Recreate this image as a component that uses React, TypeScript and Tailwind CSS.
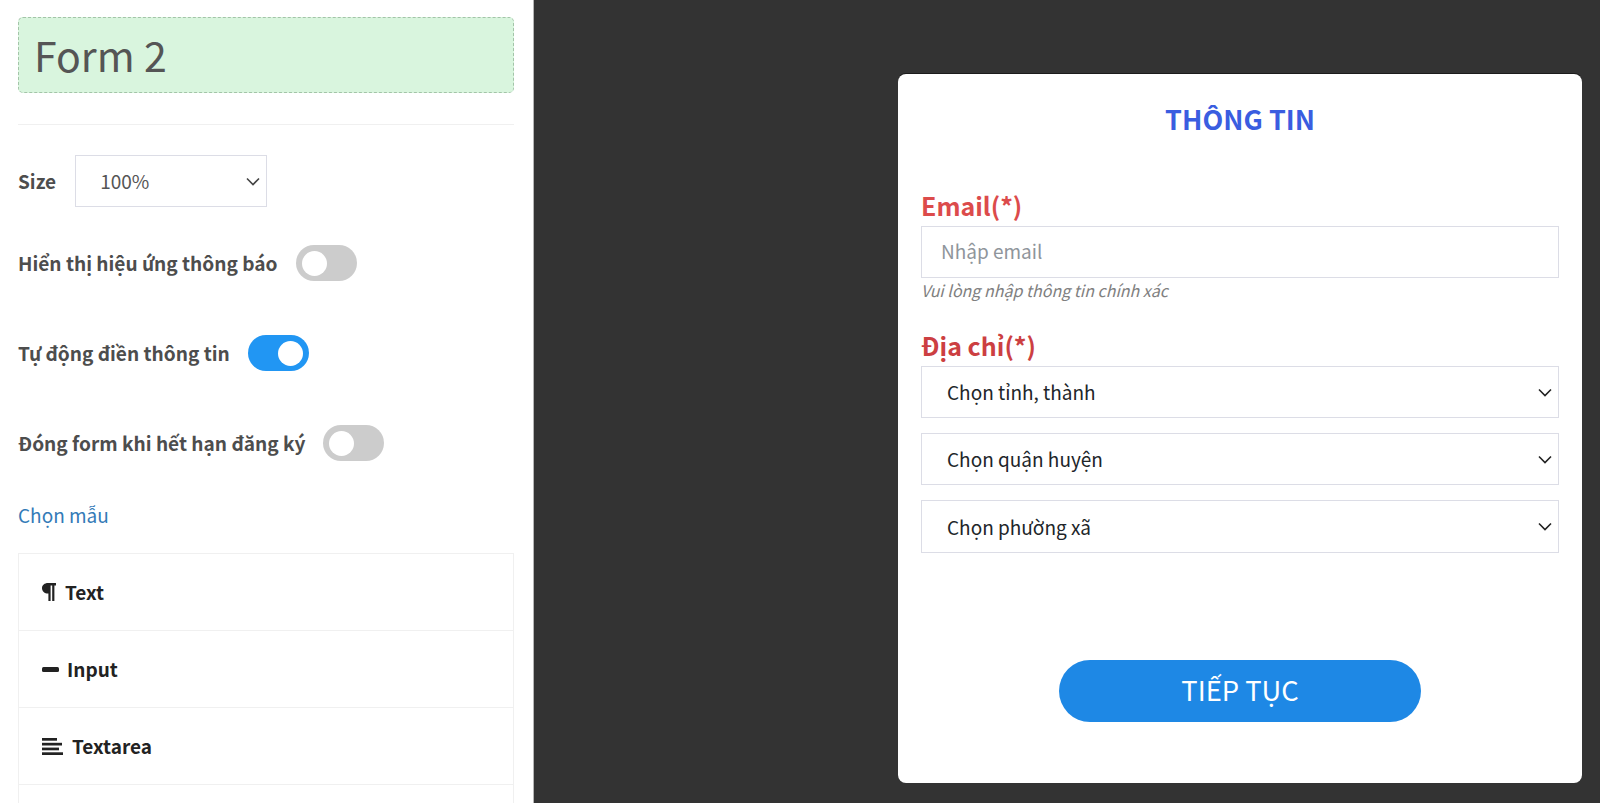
import React from 'react';

const font = "font-['Noto_Sans_CJK_SC','Noto_Sans',sans-serif]";

const Chevron: React.FC<{ className?: string }> = ({ className }) => (
  <svg viewBox="0 0 14 9" className={className} fill="none" stroke="currentColor" strokeWidth="1.6">
    <path d="M1 1.5l6 6 6-6" />
  </svg>
);

const ParagraphIcon = () => (
  <svg viewBox="0 0 14 18" className="h-[18px] w-[14px]" fill="currentColor">
    <path d="M6 0h8v2.5h-1.6V18H10.2V2.5H8.6V18H6.4v-7.5H6C2.6 10.5 0 8.2 0 5.2S2.6 0 6 0z" />
  </svg>
);

const MinusIcon = () => (
  <svg viewBox="0 0 17 5" className="h-[5px] w-[17px]" fill="currentColor">
    <rect width="17" height="5" rx="1.5" />
  </svg>
);

const TextareaIcon = () => (
  <svg viewBox="0 0 21 17" className="h-[17px] w-[21px]" fill="currentColor">
    <rect y="0" width="15" height="2.7" />
    <rect y="4.8" width="20" height="2.7" />
    <rect y="9.6" width="17" height="2.7" />
    <rect y="14.3" width="21" height="2.7" />
  </svg>
);

const Toggle: React.FC<{ on?: boolean }> = ({ on }) => (
  <div className={`flex h-[36px] w-[61px] items-center rounded-full px-[6px] ${on ? 'justify-end bg-[#2196f3]' : 'justify-start bg-[#cccccc]'}`}>
    <div className="h-[25px] w-[25px] rounded-full bg-white" />
  </div>
);

const SwitchRow: React.FC<{ label: string; on?: boolean; className?: string }> = ({ label, on, className }) => (
  <div className={`flex h-[36px] items-center gap-[18px] ${className}`}>
    <span className="pb-[1px] text-[19.1px] leading-[24px] font-bold text-[#4d4d4d]">{label}</span>
    <Toggle on={on} />
  </div>
);

const ElementRow: React.FC<{ label: string; icon: React.ReactNode; gap: string }> = ({ label, icon, gap }) => (
  <div className={`flex h-[77px] items-center border-b border-[#f0f0f0] pl-[23px] text-[#222222] ${gap}`}>
    {icon}
    <span className="pb-[1px] text-[19px] leading-[24px] font-bold">{label}</span>
  </div>
);

const AddressSelect: React.FC<{ label: string; className?: string }> = ({ label, className }) => (
  <div className={`flex items-center justify-between border border-[#dcdde6] pr-[6px] pl-[25px] ${className}`}>
    <span className="text-[19px] leading-[26px] text-[#212529]">{label}</span>
    <Chevron className="h-[9px] w-[14px] text-[#222222]" />
  </div>
);

export default function App() {
  return (
    <div className={`flex h-[803px] overflow-hidden bg-[#333333] ${font}`}>
      <aside className="h-[803px] w-[534px] shrink-0 overflow-hidden border-r border-[#b5b5b5] bg-white pt-[17px] pr-[19px] pl-[18px]">
        <div className="flex h-[76px] items-center rounded-[5px] border border-dashed border-[#a3c4a8] bg-[#d9f5de] pb-[2px] pl-[15px]">
          <span className="text-[41px] leading-[52px] text-[#555555]">Form 2</span>
        </div>
        <div className="mt-[31px] border-t border-[#f0f0f0]" />

        <div className="mt-[30px] flex items-center gap-[19px]">
          <span className="pb-[1px] text-[19px] leading-[24px] font-bold text-[#4d4d4d]">Size</span>
          <div className="flex h-[52px] w-[192px] items-center justify-between border border-[#dcdde6] pr-[6px] pl-[24px]">
            <span className="pb-[1px] text-[19px] leading-[24px] text-[#555555]">100%</span>
            <Chevron className="h-[9px] w-[14px] text-[#444444]" />
          </div>
        </div>

        <SwitchRow label="Hiển thị hiệu ứng thông báo" className="mt-[38px]" />
        <SwitchRow label="Tự động điền thông tin" on className="mt-[54px]" />
        <SwitchRow label="Đóng form khi hết hạn đăng ký" className="mt-[54px]" />

        <div className="mt-[41px] text-[19px] leading-[26px] text-[#337ab7]">Chọn mẫu</div>

        <div className="mt-[25px] border-x border-t border-[#f0f0f0]">
          <ElementRow label="Text" gap="gap-[9px]" icon={<ParagraphIcon />} />
          <ElementRow label="Input" gap="gap-[8px]" icon={<MinusIcon />} />
          <ElementRow label="Textarea" gap="gap-[9px]" icon={<TextareaIcon />} />
          <div className="h-[40px]" />
        </div>
      </aside>

      <main className="flex flex-1 justify-end pt-[74px] pr-[18px]">
        <div className="h-[709px] w-[684px] rounded-[8px] bg-white px-[23px] pt-[27px] shadow-[0_-1px_0_#1c1c1c]">
          <h2 className="text-center text-[27px] leading-[36px] font-bold text-[#3a5de0]">THÔNG TIN</h2>

          <div className="mt-[52px] text-[25px] leading-[32px] font-bold text-[#dc4b4b]">Email(*)</div>
          <input
            placeholder="Nhập email"
            className="mt-[5px] block h-[52px] w-full border border-[#dcdde6] pb-[3px] pl-[19px] text-[19px] outline-none placeholder:text-[#8f959b]"
          />
          <div className="mt-[1px] text-[16px] leading-[22px] text-[#808080] italic">Vui lòng nhập thông tin chính xác</div>

          <div className="mt-[28px] text-[25px] leading-[32px] font-bold text-[#cc3f42]">Địa chỉ(*)</div>
          <AddressSelect label="Chọn tỉnh, thành" className="mt-[5px] h-[52px]" />
          <AddressSelect label="Chọn quận huyện" className="mt-[15px] h-[52px]" />
          <AddressSelect label="Chọn phường xã" className="mt-[15px] h-[53px]" />

          <div className="mt-[107px] flex justify-center">
            <button className="h-[62px] w-[362px] rounded-full bg-[#1e88e5] pb-[5px] text-[27.3px] leading-[36px] text-white">TIẾP TỤC</button>
          </div>
        </div>
      </main>
    </div>
  );
}
